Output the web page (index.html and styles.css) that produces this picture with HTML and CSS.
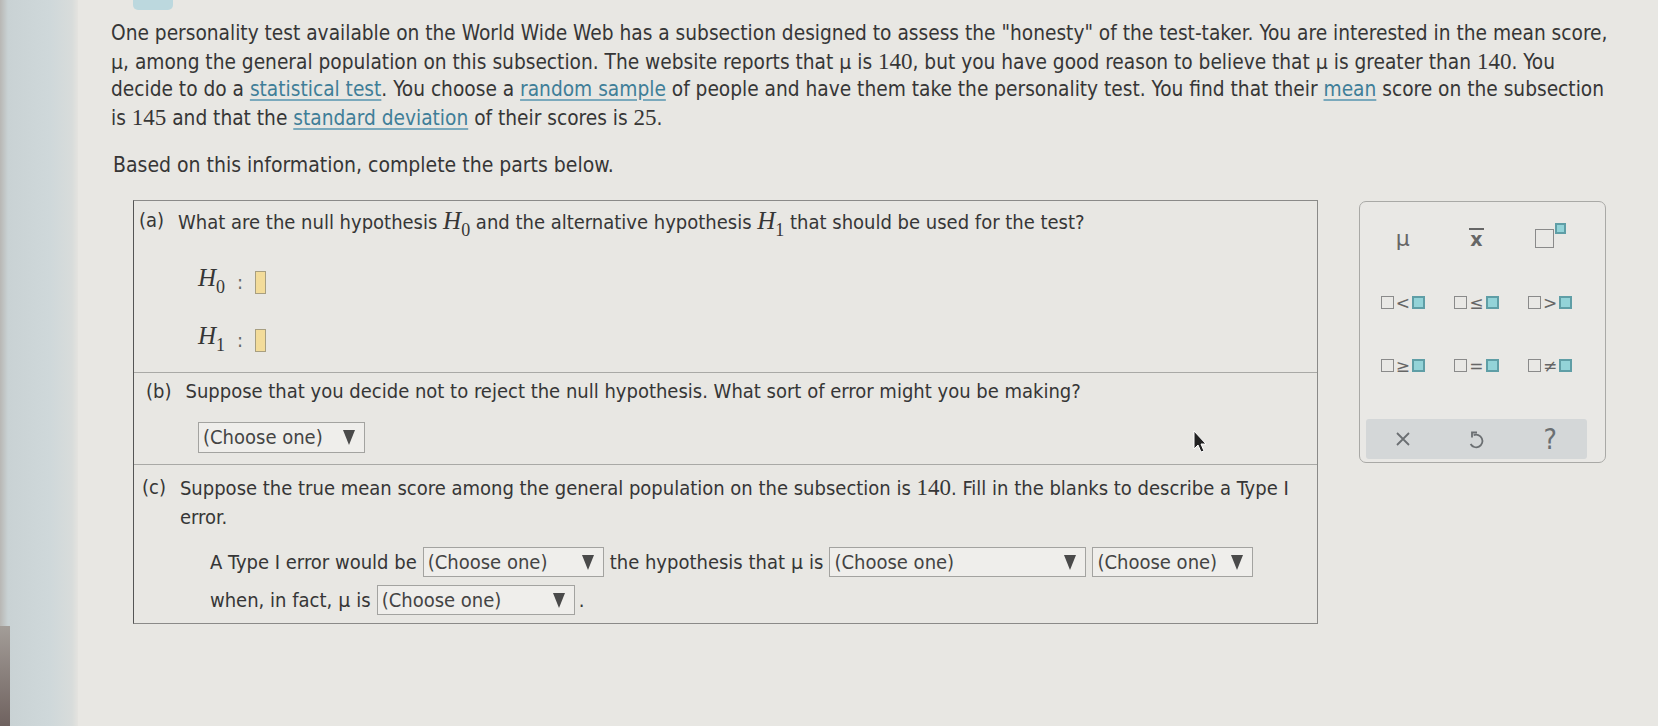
FILE: index.html
```html
<!DOCTYPE html>
<html lang="en">
<head>
    <meta charset="UTF-8">
    <title>Hypothesis Testing - Type I and II Errors</title>
    <link rel="stylesheet" href="styles.css">
</head>
<body>
    <div class="page">
        <div class="edge">
            <div class="edge-dark"></div>
        </div>

        <div class="main">
            <div class="tab"></div>

            <p class="intro">
                One personality test available on the World Wide Web has a subsection designed to assess the "honesty" of the test-taker. You are interested in the mean score,<br>
                <span class="mu">&mu;</span>, among the general population on this subsection. The website reports that <span class="mu">&mu;</span> is <span class="num">140</span>, but you have good reason to believe that <span class="mu">&mu;</span> is greater than <span class="num">140</span>. You<br>
                decide to do a <a href="#">statistical test</a>. You choose a <a href="#">random sample</a> of people and have them take the personality test. You find that their <a href="#">mean</a> score on the subsection<br>
                is <span class="num">145</span> and that the <a href="#">standard deviation</a> of their scores is <span class="num">25</span>.
            </p>

            <p class="lead">Based on this information, complete the parts below.</p>

            <div class="work">
                <div class="parts">
                    <div class="part part-a">
                        <div class="ask">
                            <span class="tag">(a)</span>
                            <span>What are the null hypothesis <i class="h">H<sub>0</sub></i> and the alternative hypothesis <i class="h">H<sub>1</sub></i> that should be used for the test?</span>
                        </div>
                        <div class="hyp">
                            <span class="h">H<sub>0</sub></span>
                            <span class="colon">:</span>
                            <span class="slot"></span>
                        </div>
                        <div class="hyp">
                            <span class="h">H<sub>1</sub></span>
                            <span class="colon">:</span>
                            <span class="slot"></span>
                        </div>
                    </div>

                    <div class="part part-b">
                        <div class="ask">
                            <span class="tag">(b)</span>
                            <span>Suppose that you decide not to reject the null hypothesis. What sort of error might you be making?</span>
                        </div>
                        <div class="pick pick-b">(Choose one) <span class="arrow"></span></div>
                    </div>

                    <div class="part part-c">
                        <div class="ask">
                            <span class="tag">(c)</span>
                            <span>Suppose the true mean score among the general population on the subsection is <span class="num">140</span>. Fill in the blanks to describe a Type I<br>error.</span>
                        </div>
                        <div class="fill">
                            <div class="fill-row">
                                A Type I error would be
                                <div class="pick w1">(Choose one) <span class="arrow"></span></div>
                                the hypothesis that <span class="mu">&mu;</span> is
                                <div class="pick w2">(Choose one) <span class="arrow"></span></div>
                                <div class="pick w3">(Choose one) <span class="arrow"></span></div>
                            </div>
                            <div class="fill-row">
                                when, in fact, <span class="mu">&mu;</span> is
                                <div class="pick w4">(Choose one) <span class="arrow"></span></div>
                                <span class="dot">.</span>
                            </div>
                        </div>
                    </div>
                </div>

                <div class="keys">
                    <div class="key-grid">
                        <div class="key">&mu;</div>
                        <div class="key"><span class="xbar">x</span></div>
                        <div class="key"><span class="sq"></span><span class="sq teal sup"></span></div>

                        <div class="key"><span class="sq"></span><span class="op">&lt;</span><span class="sq teal"></span></div>
                        <div class="key"><span class="sq"></span><span class="op">&le;</span><span class="sq teal"></span></div>
                        <div class="key"><span class="sq"></span><span class="op">&gt;</span><span class="sq teal"></span></div>

                        <div class="key"><span class="sq"></span><span class="op">&ge;</span><span class="sq teal"></span></div>
                        <div class="key"><span class="sq"></span><span class="op">=</span><span class="sq teal"></span></div>
                        <div class="key"><span class="sq"></span><span class="op">&ne;</span><span class="sq teal"></span></div>
                    </div>
                    <div class="key-bar">
                        <span class="tool">
                            <svg width="20" height="20" viewBox="0 0 20 20"><path d="M4 4 L16 16 M16 4 L4 16" stroke="#6b6f72" stroke-width="1.8" fill="none"/></svg>
                        </span>
                        <span class="tool">
                            <svg width="20" height="22" viewBox="0 0 20 22"><path d="M4.6 16 A6.3 6.3 0 1 0 7.6 7.2" stroke="#6b6f72" stroke-width="1.8" fill="none"/><path d="M11 4.5 L6 4.5 L6 9.5" stroke="#6b6f72" stroke-width="1.8" fill="none"/></svg>
                        </span>
                        <span class="tool help">?</span>
                    </div>
                </div>
            </div>
        </div>
    </div>

    <svg class="cursor" width="16" height="24" viewBox="0 0 16 24"><path d="M2 1 L2 19 L6 15 L9 22 L12 21 L9 14 L14 14 Z" fill="#222" stroke="#fff" stroke-width="1"/></svg>
</body>
</html>
```

FILE: styles.css
```css
body {
    margin: 0;
    background-color: #e8e7e3;
    font-family: "DejaVu Sans Condensed", "DejaVu Sans", sans-serif;
    color: #363636;
    overflow: hidden;
}
.page {
    display: flex;
    height: 726px;
}
.edge {
    width: 78px;
    flex-shrink: 0;
    background: linear-gradient(90deg, #b8b7b4 0px, #c9d2d4 8px, #cfd8da 50px, #d8dcdb 72px, #e4e3df 78px);
    position: relative;
}
.edge-dark {
    position: absolute;
    left: 0;
    bottom: 0;
    width: 10px;
    height: 100px;
    background: linear-gradient(180deg, #a39d98, #6f625f);
}
.main {
    padding: 20px 0 0 33px;
    position: relative;
    flex: 1;
}
.tab {
    position: absolute;
    top: 0;
    left: 55px;
    width: 40px;
    height: 10px;
    background-color: #bcd8de;
    border-radius: 0 0 5px 5px;
}
.intro {
    margin: 0;
    white-space: nowrap;
    font-size: 20.7px;
    line-height: 27.5px;
}
a {
    color: #3f7e98;
    text-decoration: underline;
    text-decoration-color: #7aa9bc;
    text-underline-offset: 3px;
}
.num {
    font-family: "Liberation Serif", serif;
    font-size: 23px;
}
.mu {
    font-family: "DejaVu Sans", sans-serif;
    font-size: 19px;
}
.lead {
    margin: 20px 0 0 2px;
    font-size: 21px;
    line-height: 27px;
}
.work {
    display: flex;
    align-items: flex-start;
    gap: 41px;
    margin-top: 21px;
}
.parts {
    width: 1183px;
    margin-left: 22px;
    border: 1px solid #8a8a88;
    border-left-color: #555;
    font-size: 20px;
    line-height: 27px;
}
.part {
    border-top: 1px solid #a9a9a6;
}
.part:first-child {
    border-top: none;
}
.part-a {
    height: 171px;
    padding: 6px 0 0 0;
    box-sizing: border-box;
}
.part-b {
    height: 92px;
    padding: 5px 0 0 7px;
    box-sizing: border-box;
}
.part-c {
    height: 159px;
    padding: 8px 0 0 3px;
    box-sizing: border-box;
}
.ask {
    display: flex;
    gap: 14px;
    padding-left: 5px;
    white-space: nowrap;
}
.ask .tag {
    flex-shrink: 0;
}
.part-c .ask {
    line-height: 29px;
}
.h {
    font-family: "Liberation Serif", serif;
    font-style: italic;
    font-size: 25px;
}
.h sub {
    font-style: normal;
    font-size: 18px;
    vertical-align: -7px;
}
.hyp {
    display: flex;
    align-items: center;
    gap: 12px;
    margin-left: 64px;
    height: 30px;
}
.part-a .hyp:nth-child(2) {
    margin-top: 23px;
}
.part-a .hyp:nth-child(3) {
    margin-top: 28px;
}
.hyp .colon {
    color: #666;
}
.slot {
    display: inline-block;
    width: 9px;
    height: 21px;
    background-color: #f3dc9a;
    border: 1px solid #a89f80;
}
.pick {
    display: inline-flex;
    align-items: center;
    justify-content: space-between;
    height: 30px;
    padding: 0 9px 0 4px;
    box-sizing: border-box;
    border: 1px solid #a3a3a0;
    background-color: #efeeeb;
    font-size: 20px;
    color: #444;
    vertical-align: middle;
}
.arrow {
    width: 0;
    height: 0;
    border-left: 6px solid transparent;
    border-right: 6px solid transparent;
    border-top: 15px solid #4a4a4a;
    margin-left: 10px;
}
.pick-b {
    width: 167px;
    height: 31px;
    margin: 17px 0 0 57px;
}
.fill {
    margin: 13px 0 0 73px;
}
.fill-row {
    display: flex;
    align-items: center;
    gap: 6px;
    height: 34px;
    margin-bottom: 4px;
    white-space: nowrap;
}
.w1 {
    width: 181px;
}
.w2 {
    width: 257px;
}
.w3 {
    width: 161px;
}
.w4 {
    width: 198px;
}
.dot {
    margin-left: -2px;
}
.keys {
    width: 247px;
    height: 262px;
    border: 1px solid #a9a9a6;
    border-radius: 7px;
    background-color: #e9e8e5;
    box-sizing: border-box;
    padding: 12px 18px 0 6px;
    margin-top: 1px;
}
.key-grid {
    display: grid;
    grid-template-columns: repeat(3, 1fr);
    row-gap: 0;
}
.key {
    height: 66px;
    display: flex;
    align-items: center;
    justify-content: center;
    font-family: "DejaVu Sans", sans-serif;
    font-size: 22px;
    color: #666;
    padding-bottom: 18px;
    box-sizing: border-box;
}
.key-grid .key:nth-child(n+4) {
    height: 63px;
    padding-bottom: 18px;
}
.xbar {
    border-top: 2px solid #666;
    line-height: 19px;
    padding: 0 1px;
    font-weight: bold;
    font-size: 19px;
}
.sq {
    display: inline-block;
    width: 13px;
    height: 13px;
    border: 1.5px solid #8a8a8a;
    box-sizing: border-box;
}
.sq.teal {
    background-color: #93d3d8;
    border-color: #5f9ea6;
    border-width: 2px;
}
.sq.sup {
    width: 11px;
    height: 11px;
    margin-top: -20px;
    margin-left: 1px;
}
.key:nth-child(3) .sq:first-child {
    width: 19px;
    height: 19px;
}
.op {
    font-size: 17px;
    margin: 0 2px;
    color: #666;
}
.key-bar {
    display: flex;
    justify-content: space-around;
    align-items: center;
    height: 40px;
    margin-top: 13px;
    background-color: #d4d7d8;
    border-radius: 3px;
}
.tool {
    display: flex;
    align-items: center;
    width: 30px;
    justify-content: center;
}
.help {
    font-size: 28px;
    color: #6b6f72;
}
.cursor {
    position: absolute;
    left: 1192px;
    top: 430px;
}
```
